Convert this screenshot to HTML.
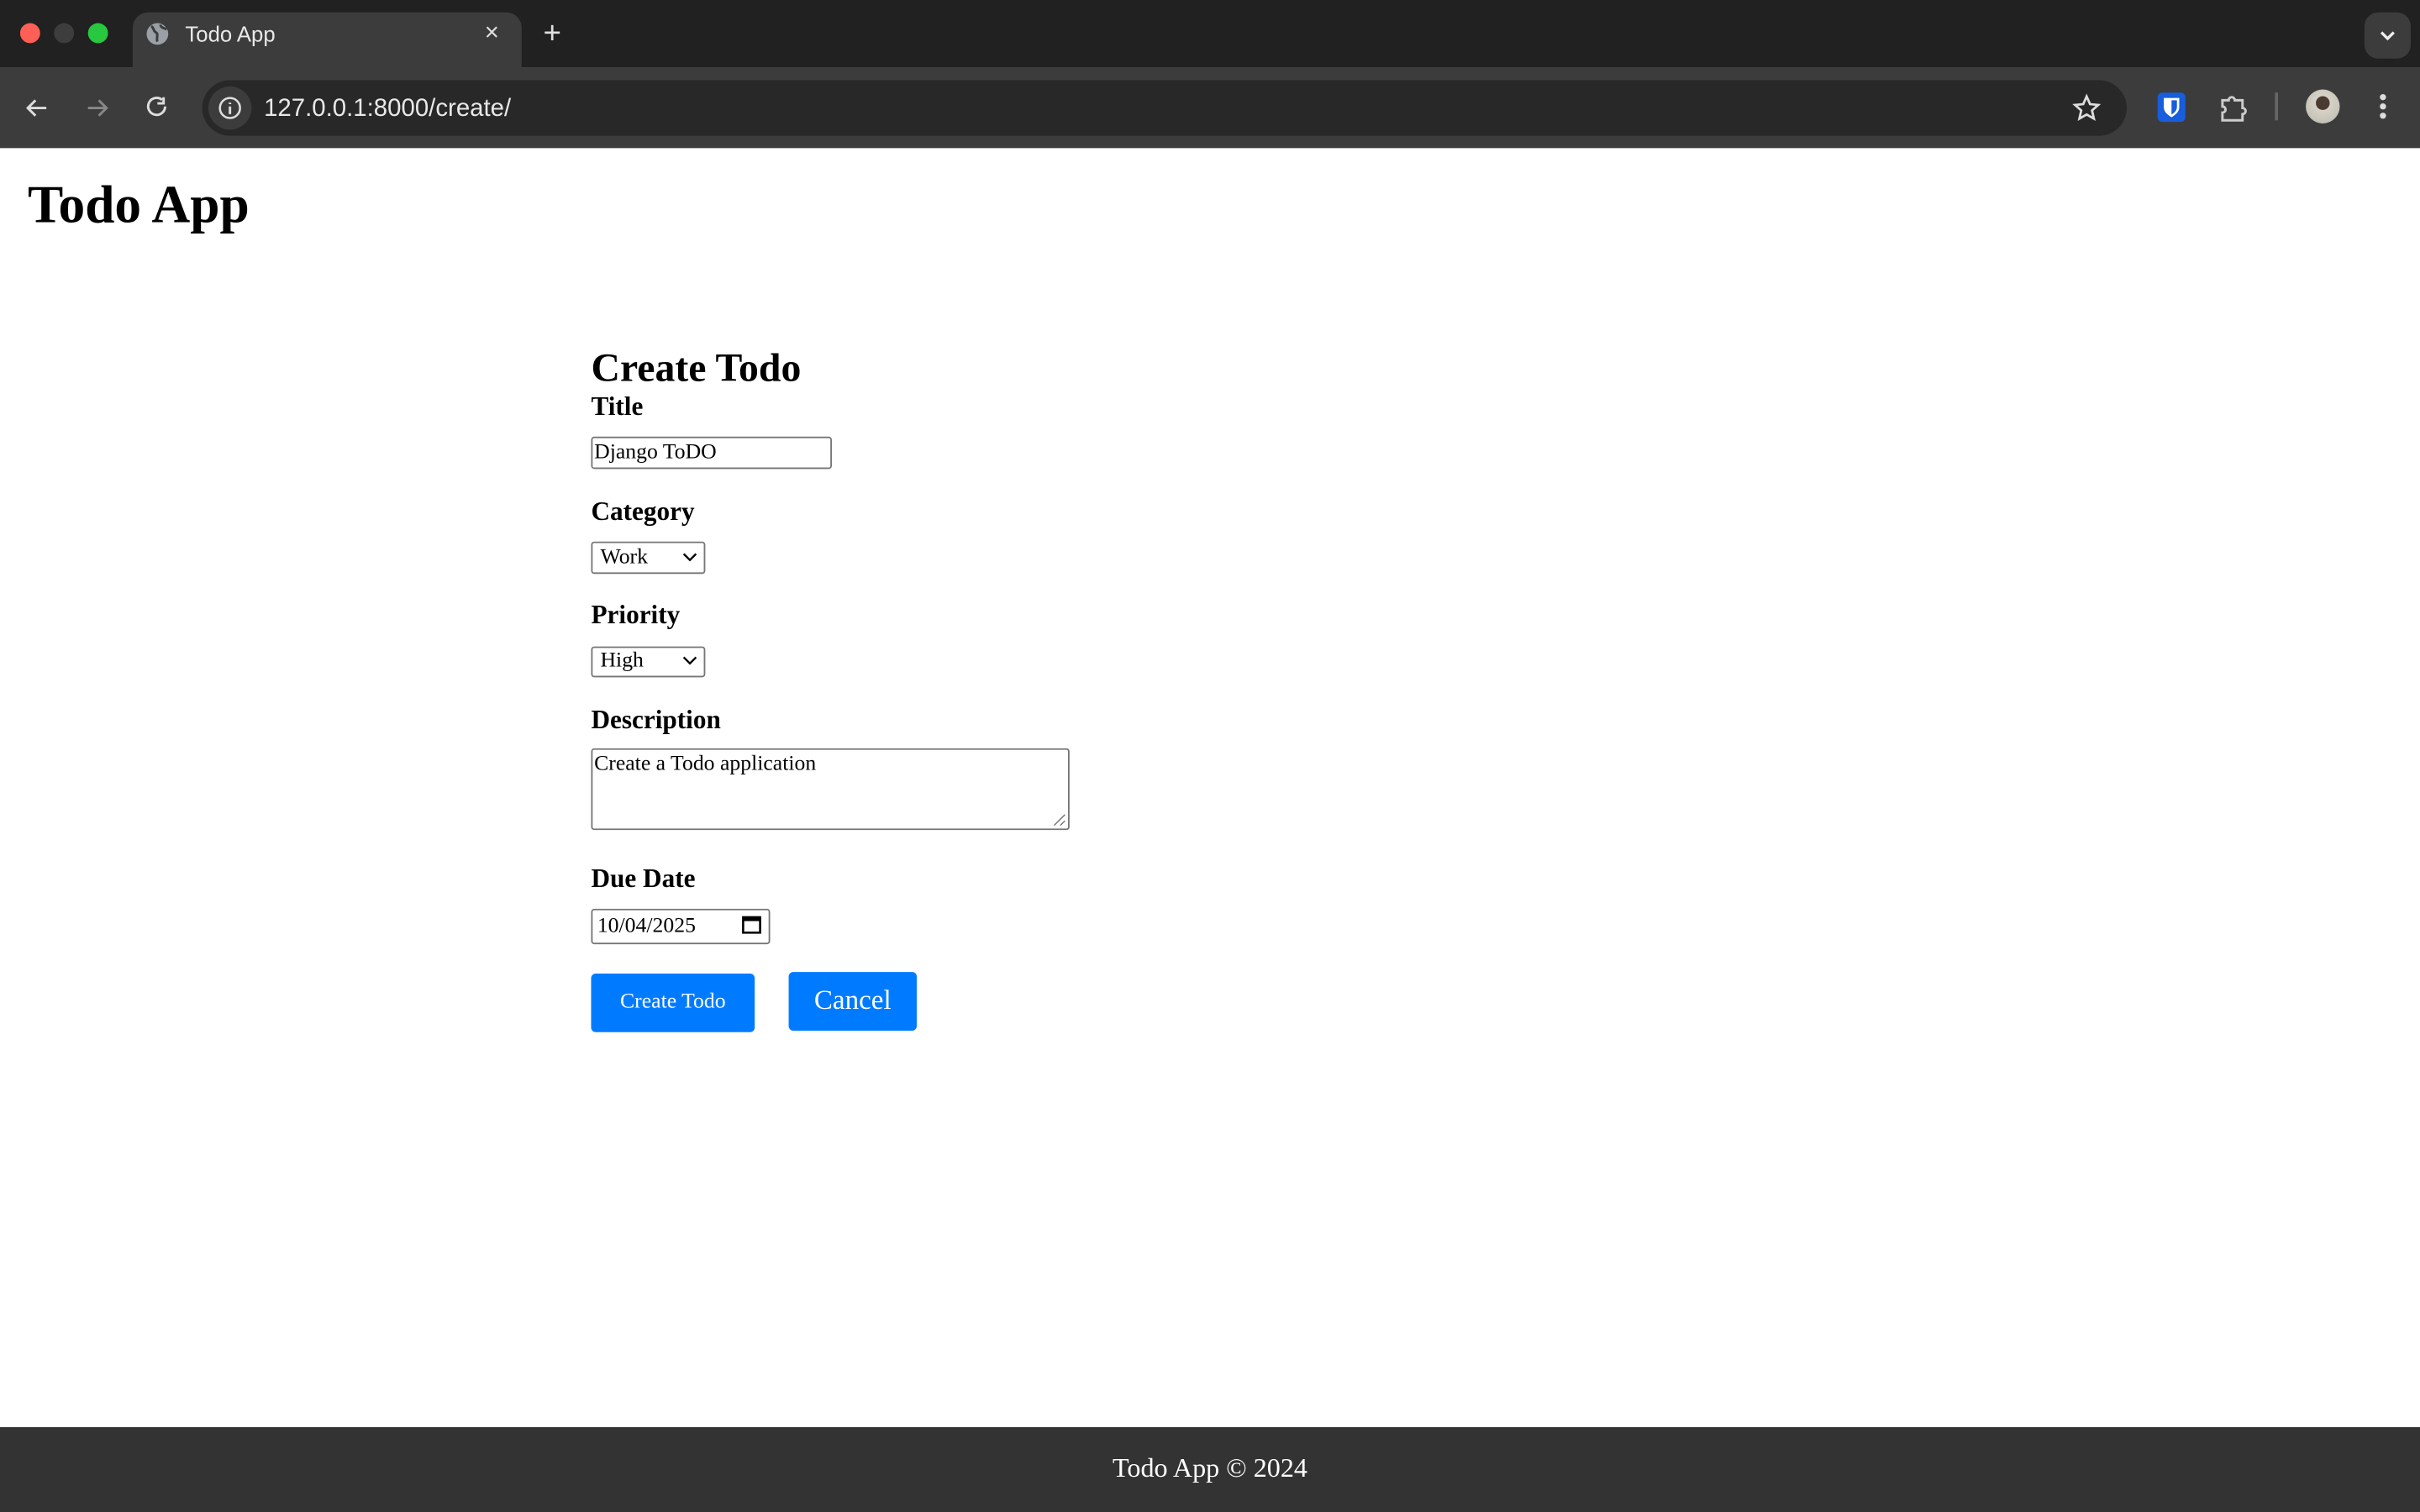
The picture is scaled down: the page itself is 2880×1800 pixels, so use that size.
<!DOCTYPE html>
<html><head><meta charset="utf-8"><style>
html,body{margin:0;padding:0;width:2880px;height:1800px;overflow:hidden;background:#fff}
#w{position:absolute;left:0;top:0;width:1568px;height:980px;transform:scale(1.836735);transform-origin:0 0;font-family:"Liberation Serif",serif;color:#000}
.a{position:absolute;line-height:1;white-space:nowrap}
.b{position:absolute;box-sizing:border-box}
.lbl{font-weight:bold;font-size:17px}
.inp{border:1px solid #767676;border-radius:2px;background:#fff;font-size:14px}
.btn{background:#007bff;color:#fff;border-radius:3px;text-align:center}
.ui{font-family:"Liberation Sans",sans-serif}
</style></head><body><div id="w">
<div class="b" style="left:0;top:0;width:1568px;height:44px;background:#202120"></div>
<div class="b" style="left:13px;top:15px;width:13px;height:13px;border-radius:50%;background:#fe5f57"></div>
<div class="b" style="left:35px;top:15px;width:13px;height:13px;border-radius:50%;background:#3d3d3d"></div>
<div class="b" style="left:57px;top:15px;width:13px;height:13px;border-radius:50%;background:#28c840"></div>
<div class="b" style="left:86px;top:8px;width:252px;height:40px;background:#3c3c3c;border-radius:10px 10px 0 0"></div>
<svg class="b" style="left:94px;top:14px" width="16" height="16" viewBox="0 0 16 16"><circle cx="8" cy="8" r="7" fill="#9aa0a6"/><path d="M4 3c2 1 1 3 3 4s0 4 1 6M10 2c0 2 2 2 4 3" stroke="#3c3c3c" stroke-width="1.6" fill="none"/></svg>
<div class="a ui" style="left:120px;top:15px;font-size:14px;color:#e8e8e8">Todo App</div>
<div class="a ui" style="left:314px;top:14px;font-size:16px;color:#e0e0e0">×</div>
<div class="a ui" style="left:352px;top:12px;font-size:20px;color:#e0e0e0">+</div>
<div class="b" style="left:1532px;top:8px;width:30px;height:30px;border-radius:9px;background:#3c3c3c"></div>
<svg class="b" style="left:1540px;top:16px" width="14" height="14" viewBox="0 0 14 14"><path d="M3 5l4 4 4-4" stroke="#eee" stroke-width="1.8" fill="none"/></svg>
<div class="b" style="left:0;top:44px;width:1568px;height:52px;background:#3c3c3c"></div>
<svg class="b" style="left:14px;top:60px" width="20" height="20" viewBox="0 0 20 20"><path d="M16 10H4M9 5l-5 5 5 5" stroke="#ddd" stroke-width="1.6" fill="none"/></svg>
<svg class="b" style="left:53px;top:60px" width="20" height="20" viewBox="0 0 20 20"><path d="M4 10h12M11 5l5 5-5 5" stroke="#888" stroke-width="1.6" fill="none"/></svg>
<svg class="b" style="left:92px;top:60px" width="20" height="20" viewBox="0 0 20 20"><path d="M15 9a5.5 5.5 0 1 1-2-4.3M14 3v4h-4" stroke="#ddd" stroke-width="1.6" fill="none"/></svg>
<div class="b" style="left:131px;top:52px;width:1247px;height:36px;border-radius:18px;background:#282828"></div>
<div class="b" style="left:135px;top:56px;width:28px;height:28px;border-radius:50%;background:#3c3c3c"></div>
<svg class="b" style="left:141px;top:62px" width="16" height="16" viewBox="0 0 16 16"><circle cx="8" cy="8" r="6.5" stroke="#ddd" stroke-width="1.4" fill="none"/><path d="M8 7v5M8 4.5v1" stroke="#ddd" stroke-width="1.6"/></svg>
<div class="a ui" style="left:171px;top:63px;font-size:16px;color:#e8e8e8">127.0.0.1:8000/create/</div>
<svg class="b" style="left:1342px;top:60px" width="20" height="20" viewBox="0 0 20 20"><path d="M10 2.5l2.2 5 5.3.5-4 3.6 1.2 5.3L10 14.2 5.3 16.9l1.2-5.3-4-3.6 5.3-.5z" stroke="#ddd" stroke-width="1.5" fill="none"/></svg>
<div class="b" style="left:1398px;top:60px;width:18px;height:19px;border-radius:3px;background:#175ddc"></div>
<svg class="b" style="left:1398px;top:60px" width="18" height="19" viewBox="0 0 18 19"><path d="M4 3.5h10v6c0 3-2.5 5-5 6.5-2.5-1.5-5-3.5-5-6.5z" fill="#fff"/><path d="M9 5h3.5v4.5c0 2-1.5 3.5-3.5 4.8z" fill="#175ddc"/></svg>
<svg class="b" style="left:1436px;top:59px" width="22" height="22" viewBox="0 0 22 22"><path d="M4 6h4a2 2 0 0 1 4 0h5v5a2 2 0 0 1 0 4v4H4v-5a2 2 0 0 0 0-4z" stroke="#ccc" stroke-width="1.6" fill="none"/></svg>
<div class="b" style="left:1474px;top:60px;width:2px;height:18px;background:#666"></div>
<div class="b" style="left:1494px;top:58px;width:22px;height:22px;border-radius:50%;background:radial-gradient(circle at 50% 40%,#4a3b32 25%,#d8d2c6 27%,#b8b8b0)"></div>
<div class="b" style="left:1542px;top:61px;width:4px;height:4px;border-radius:50%;background:#ddd;box-shadow:0 6px 0 #ddd,0 12px 0 #ddd"></div>

<div class="a" style="left:18px;top:116px;font-size:34.5px;font-weight:bold">Todo App</div>
<div class="a" style="left:383px;top:226px;font-size:26px;font-weight:bold">Create Todo</div>
<div class="a lbl" style="left:383px;top:255px">Title</div>
<div class="b inp" style="left:383px;top:283px;width:156px;height:21px"></div>
<div class="a" style="left:385px;top:287px;font-size:14px">Django ToDO</div>
<div class="a lbl" style="left:383px;top:323px">Category</div>
<div class="b inp" style="left:383px;top:351px;width:74px;height:21px"></div>
<div class="a" style="left:389px;top:355px;font-size:14px">Work</div>
<svg class="b" style="left:441px;top:356px" width="12" height="10" viewBox="0 0 12 10"><path d="M2 3l4 4 4-4" stroke="#000" stroke-width="1.3" fill="none"/></svg>
<div class="a lbl" style="left:383px;top:390px">Priority</div>
<div class="b inp" style="left:383px;top:419px;width:74px;height:20px"></div>
<div class="a" style="left:389px;top:422px;font-size:14px">High</div>
<svg class="b" style="left:441px;top:423px" width="12" height="10" viewBox="0 0 12 10"><path d="M2 3l4 4 4-4" stroke="#000" stroke-width="1.3" fill="none"/></svg>
<div class="a lbl" style="left:383px;top:458px">Description</div>
<div class="b inp" style="left:383px;top:485px;width:310px;height:53px"></div>
<div class="a" style="left:385px;top:489px;font-size:14px">Create a Todo application</div>
<svg class="b" style="left:682px;top:527px" width="9" height="9" viewBox="0 0 9 9"><path d="M1 8l7-7M5 8l3-3" stroke="#777" stroke-width="0.8"/></svg>
<div class="a lbl" style="left:383px;top:561px">Due Date</div>
<div class="b inp" style="left:383px;top:589px;width:116px;height:23px"></div>
<div class="a" style="left:387px;top:594px;font-size:14px">10/04/2025</div>
<svg class="b" style="left:480px;top:592px" width="14" height="14" viewBox="0 0 14 14"><rect x="1.5" y="2.5" width="11" height="10" stroke="#000" stroke-width="1.4" fill="none"/><rect x="1.5" y="2.5" width="11" height="2.5" fill="#000"/></svg>
<div class="b btn" style="left:383px;top:631px;width:106px;height:38px;line-height:38px;font-size:14px">Create Todo</div>
<div class="b btn" style="left:511px;top:630px;width:83px;height:38px;line-height:36px;font-size:18px">Cancel</div>

<div class="b" style="left:0;top:925px;width:1568px;height:55px;background:#333"></div>
<div class="a" style="left:0;width:1568px;text-align:center;top:943px;font-size:17.5px;color:#fff">Todo App © 2024</div>
</div></body></html>
